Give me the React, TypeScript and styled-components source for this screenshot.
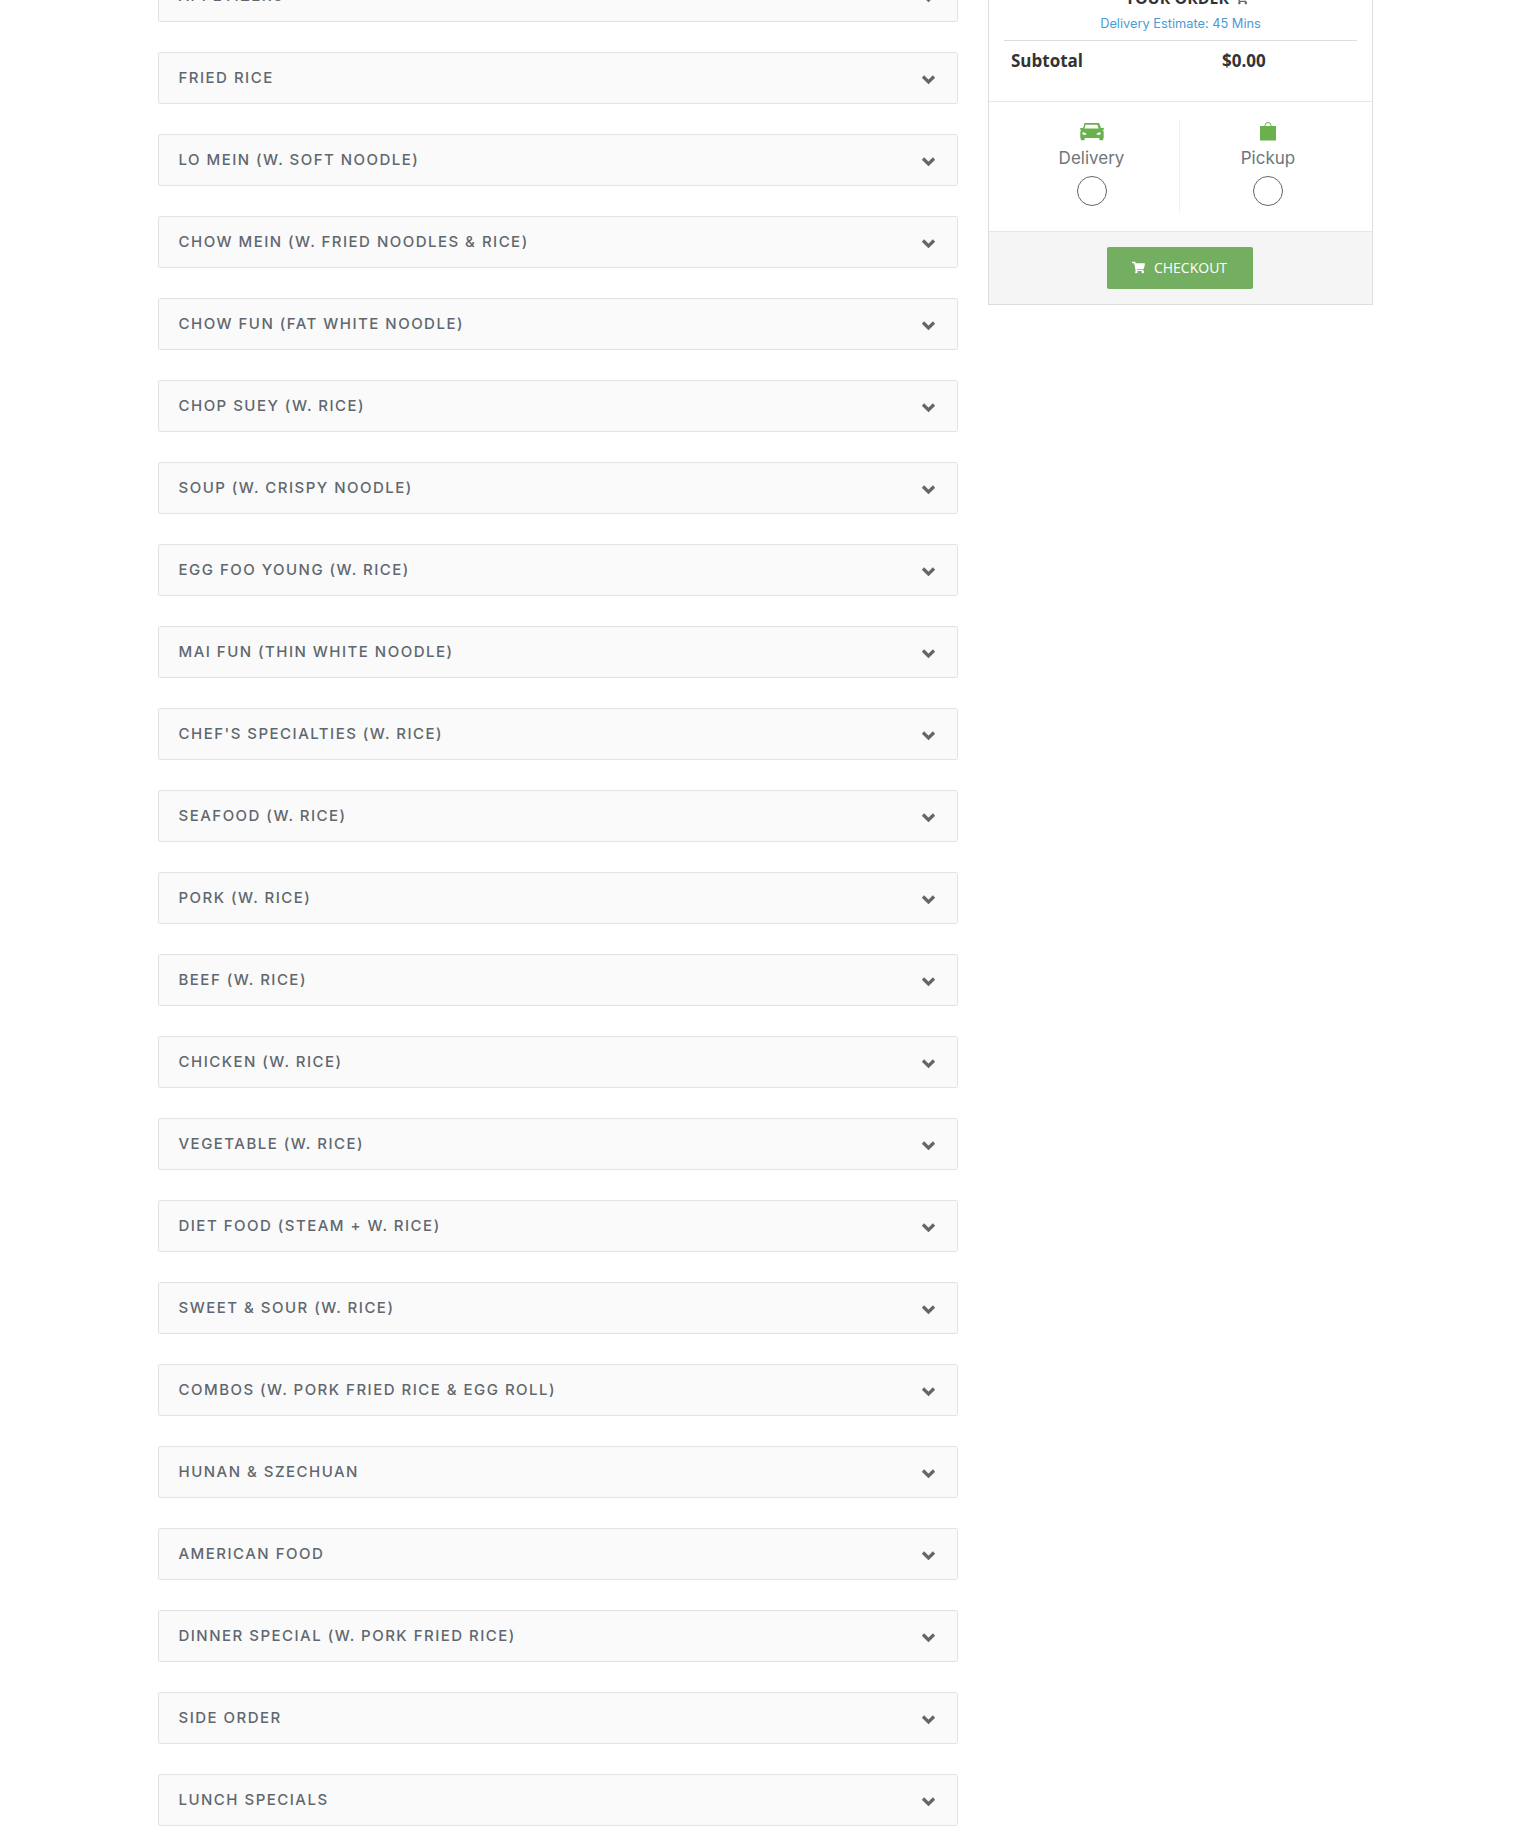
import React from 'react';
import styled, { createGlobalStyle } from 'styled-components';
import { FaShoppingCart } from 'react-icons/fa';

const categories = [
  'Appetizers',
  'Fried Rice',
  'Lo Mein (W. Soft Noodle)',
  'Chow Mein (W. Fried Noodles & Rice)',
  'Chow Fun (Fat White Noodle)',
  'Chop Suey (W. Rice)',
  'Soup (W. Crispy Noodle)',
  'Egg Foo Young (W. Rice)',
  'Mai Fun (Thin White Noodle)',
  "Chef's Specialties (W. Rice)",
  'Seafood (W. Rice)',
  'Pork (W. Rice)',
  'Beef (W. Rice)',
  'Chicken (W. Rice)',
  'Vegetable (W. Rice)',
  'Diet Food (Steam + W. Rice)',
  'Sweet & Sour (W. Rice)',
  'Combos (W. Pork Fried Rice & Egg Roll)',
  'Hunan & Szechuan',
  'American Food',
  'Dinner Special (W. Pork Fried Rice)',
  'Side Order',
  'Lunch Specials',
];

const GlobalStyle = createGlobalStyle`
  html, body {
    margin: 0;
    padding: 0;
    height: 1842px;
    overflow: hidden;
    background: #fff;
  }
`;

const Page = styled.div`
  display: grid;
  grid-template-columns: 800px 385px;
  column-gap: 30px;
  align-items: start;
  margin-top: -30px;
  padding-left: 158px;
  font-family: Inter, 'Liberation Sans', sans-serif;
`;

const MenuList = styled.div`
  display: flex;
  flex-direction: column;
  gap: 30px;
`;

const MenuRow = styled.div`
  box-sizing: border-box;
  height: 52px;
  display: flex;
  align-items: center;
  justify-content: space-between;
  padding: 0 21px 0 19.5px;
  background: #fafafa;
  border: 1px solid #e3e3e3;
  border-radius: 2px;
`;

const RowTitle = styled.span`
  margin-bottom: 2px;
  font-size: 15px;
  font-weight: 500;
  letter-spacing: 1.48px;
  text-transform: uppercase;
  color: #60676e;
`;

const ChevronIcon = styled.svg`
  width: 15px;
  height: 11px;
  margin-top: 2px;
  color: #666;
`;

const Panel = styled.aside`
  box-sizing: border-box;
  height: 335px;
  display: flex;
  flex-direction: column;
  background: #fff;
  border: 1px solid #ddd;
`;

const Summary = styled.div`
  height: 131px;
  box-sizing: border-box;
  padding: 16px 15px 0;
  border-bottom: 1px solid #e6e6e6;
  text-align: center;
`;

const OrderTitle = styled.div`
  font-family: 'Open Sans', sans-serif;
  font-size: 16px;
  font-weight: 700;
  line-height: 22px;
  color: #333;
  text-transform: uppercase;
  display: flex;
  justify-content: center;
  align-items: center;
  gap: 6px;
  padding-left: 12px;
`;

const SmallCart = styled(FaShoppingCart)`
  width: 13px;
  height: 13px;
  color: #666;
`;

const Estimate = styled.div`
  margin-top: 5px;
  padding-bottom: 6px;
  font-size: 12.8px;
  line-height: 20px;
  color: #4b9bd3;
  border-bottom: 1px solid #ddd;
`;

const TotalRow = styled.div`
  display: grid;
  grid-template-columns: 211px 1fr;
  padding: 7px 7px 0;
  font-family: 'Open Sans', sans-serif;
  font-size: 17px;
  font-weight: 700;
  line-height: 26px;
  color: #333;
  text-align: left;
`;

const Options = styled.div`
  flex: 1;
  display: grid;
  grid-template-columns: 1fr 1fr;
  padding: 19px 16px 18px 15px;
`;

const Option = styled.label<{ $divided?: boolean }>`
  display: flex;
  flex-direction: column;
  align-items: center;
  border-right: ${p => (p.$divided ? '1px solid #f0f0f0' : 'none')};
`;

const OptionIcon = styled.svg`
  height: 20px;
  color: #6ab04c;
`;

const OptionLabel = styled.div`
  margin-top: 5px;
  font-size: 17px;
  line-height: 24px;
  color: #6e757c;
`;

const Radio = styled.span`
  box-sizing: border-box;
  width: 30px;
  height: 30px;
  margin-top: 6px;
  border: 1px solid #666;
  border-radius: 50%;
`;

const Footer = styled.div`
  height: 72px;
  display: flex;
  align-items: center;
  justify-content: center;
  padding-right: 2px;
  background: #f5f5f5;
  border-top: 1px solid #e6e6e6;
`;

const CheckoutButton = styled.button`
  width: 146px;
  height: 42px;
  display: flex;
  align-items: center;
  justify-content: center;
  gap: 9px;
  padding: 0 0 2px;
  border: none;
  border-radius: 2px;
  background: #74ae60;
  color: #fff;
  font-family: 'Open Sans', sans-serif;
  font-size: 14px;
`;

const ButtonCart = styled(FaShoppingCart)`
  width: 13px;
  height: 13px;
`;

const Chevron = () => (
  <ChevronIcon viewBox="0 0 15 11">
    <polyline points="2,2.5 7.5,8 13,2.5" fill="none" stroke="currentColor" strokeWidth="3.2" />
  </ChevronIcon>
);

const CarIcon = () => (
  <OptionIcon width="25" viewBox="0 0 25 20">
    <path
      fill="currentColor"
      fillRule="evenodd"
      d="M6 2h13c.8 0 1.3.5 1.6 1.2L22 7h2c.6 0 1 .4 1 .9s-.4.9-1 .9h-.6c.9.7 1.3 1.6 1.3 2.6V17h-.4v1.2c0 .6-.4 1-1 1h-2c-.6 0-1-.4-1-1V17H5.7v1.2c0 .6-.4 1-1 1h-2c-.6 0-1-.4-1-1V17h-.4v-5.6c0-1 .4-1.9 1.3-2.6H2c-.6 0-1-.4-1-.9s.4-.9 1-.9h2l1.4-3.8C4.7 2.5 5.200 2 6 2zM6.600 3.800 5.400 7.400h14.200l-1.200-3.600H6.600zM3.500 11.200v2c0 .3.300.5.600.5h2.800c.4 0 .6-.3.6-.6 0-.7-2.300-1.900-3.400-1.900h-.6zM21.500 11.200h-.6c-1.100 0-3.400 1.200-3.400 1.900 0 .3.200.6.600.6h2.800c.3 0 .6-.2.6-.5v-2z"
    />
  </OptionIcon>
);

const BagIcon = () => (
  <OptionIcon width="16" viewBox="0 0 16 20">
    <path d="M5 6V4.500a3 3 0 0 1 6 0V6" fill="none" stroke="currentColor" strokeWidth="1" />
    <rect x="0" y="5" width="16" height="14.500" fill="currentColor" />
  </OptionIcon>
);

const App: React.FC = () => (
  <>
    <GlobalStyle />
    <Page>
      <MenuList>
        {categories.map(name => (
          <MenuRow key={name}>
            <RowTitle>{name}</RowTitle>
            <Chevron />
          </MenuRow>
        ))}
      </MenuList>
      <Panel>
        <Summary>
          <OrderTitle>
            Your Order <SmallCart />
          </OrderTitle>
          <Estimate>Delivery Estimate: 45 Mins</Estimate>
          <TotalRow>
            <span>Subtotal</span>
            <span>$0.00</span>
          </TotalRow>
        </Summary>
        <Options>
          <Option $divided>
            <CarIcon />
            <OptionLabel>Delivery</OptionLabel>
            <Radio />
          </Option>
          <Option>
            <BagIcon />
            <OptionLabel>Pickup</OptionLabel>
            <Radio />
          </Option>
        </Options>
        <Footer>
          <CheckoutButton>
            <ButtonCart />
            CHECKOUT
          </CheckoutButton>
        </Footer>
      </Panel>
    </Page>
  </>
);

export default App;
